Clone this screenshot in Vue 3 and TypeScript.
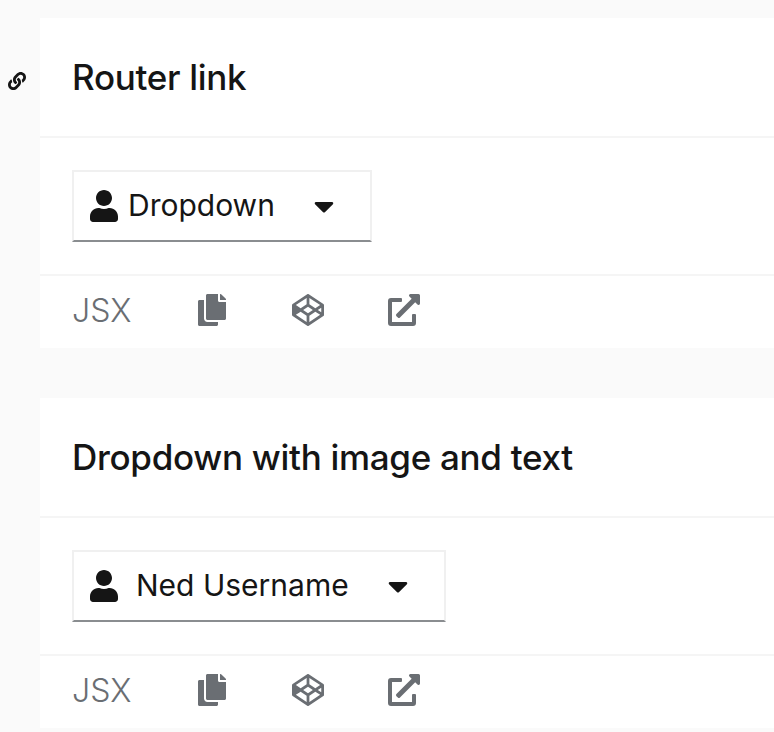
<script setup lang="ts">
interface Example {
  id: number;
  title: string;
  label: string;
  spaced: boolean;
  anchor: boolean;
}

const examples: Example[] = [
  { id: 1, title: "Router link", label: "Dropdown", spaced: false, anchor: true },
  { id: 2, title: "Dropdown with image and text", label: "Ned Username", spaced: true, anchor: false },
];
</script>

<template>
  <div class="page">
    <section v-for="ex in examples" :key="ex.id" class="card">
      <header class="card-head">
        <svg v-if="ex.anchor" class="anchor" viewBox="0 0 512 512" aria-hidden="true">
          <path d="M326.612 185.391c59.747 59.809 58.927 155.698.36 214.59-.11.12-.24.25-.36.37l-67.2 67.2c-59.27 59.27-155.699 59.262-214.96 0-59.27-59.26-59.27-155.7 0-214.96l37.106-37.106c9.84-9.84 26.786-3.3 27.294 10.606.648 17.722 3.826 35.527 9.69 52.721 1.986 5.822.567 12.262-3.783 16.612l-13.087 13.087c-28.026 28.026-28.905 73.66-1.155 101.96 28.024 28.579 74.086 28.749 102.325.51l67.2-67.19c28.191-28.191 28.073-73.757 0-101.83-3.701-3.694-7.429-6.564-10.341-8.569a16.037 16.037 0 0 1-6.947-12.606c-.396-10.567 3.348-21.456 11.698-29.806l21.054-21.055c5.521-5.521 14.182-6.199 20.584-1.731a152.482 152.482 0 0 1 20.522 17.197zM467.547 44.449c-59.261-59.262-155.69-59.27-214.96 0l-67.2 67.2c-.12.12-.25.25-.36.37-58.566 58.892-59.387 154.781.36 214.59a152.454 152.454 0 0 0 20.521 17.196c6.402 4.468 15.064 3.789 20.584-1.731l21.054-21.055c8.35-8.35 12.094-19.239 11.698-29.806a16.037 16.037 0 0 0-6.947-12.606c-2.912-2.005-6.64-4.875-10.341-8.569-28.073-28.073-28.191-73.639 0-101.83l67.2-67.19c28.239-28.239 74.3-28.069 102.325.51 27.75 28.3 26.872 73.934-1.155 101.96l-13.087 13.087c-4.35 4.35-5.769 10.79-3.783 16.612 5.864 17.194 9.042 34.999 9.69 52.721.509 13.906 17.454 20.446 27.294 10.606l37.106-37.106c59.271-59.259 59.271-155.699.001-214.959z" />
        </svg>
        <h2>{{ ex.title }}</h2>
      </header>

      <div class="card-body">
        <button class="toggle" type="button">
          <svg class="user" viewBox="0 0 448 512" aria-hidden="true">
            <path d="M224 256c70.7 0 128-57.3 128-128S294.7 0 224 0 96 57.3 96 128s57.3 128 128 128zm89.6 32h-16.7c-22.2 10.2-46.9 16-72.9 16s-50.6-5.8-72.9-16h-16.7C60.2 288 0 348.2 0 422.4V464c0 26.5 21.5 48 48 48h352c26.5 0 48-21.5 48-48v-41.6c0-74.2-60.2-134.4-134.4-134.4z" />
          </svg>
          <span class="label" :class="{ spaced: ex.spaced }">{{ ex.label }}</span>
          <svg class="caret" viewBox="0 0 320 512" aria-hidden="true">
            <path d="M31.3 192h257.3c17.8 0 26.7 21.5 14.1 34.1L174.1 354.8c-7.8 7.8-20.5 7.8-28.3 0L17.2 226.1C4.6 213.5 13.5 192 31.3 192z" />
          </svg>
        </button>
      </div>

      <footer class="card-foot">
        <span class="lang">JSX</span>
        <span class="tool">
          <svg viewBox="0 0 448 512" aria-hidden="true">
            <path d="M320 448v40c0 13.255-10.745 24-24 24H24c-13.255 0-24-10.745-24-24V120c0-13.255 10.745-24 24-24h72v296c0 30.879 25.121 56 56 56h168zm0-344V0H152c-13.255 0-24 10.745-24 24v368c0 13.255 10.745 24 24 24h272c13.255 0 24-10.745 24-24V128H344c-13.2 0-24-10.8-24-24zm120.971-31.029L375.029 7.029A24 24 0 0 0 358.059 0H352v96h96v-6.059a24 24 0 0 0-7.029-16.97z" />
          </svg>
        </span>
        <span class="tool">
          <svg viewBox="0 0 512 512" aria-hidden="true">
            <path d="M502.285 159.704l-234-156c-7.987-4.915-16.511-4.96-24.571 0l-234 156C3.714 163.703 0 170.847 0 177.989v155.999c0 7.143 3.714 14.286 9.715 18.286l234 156.022c7.987 4.915 16.511 4.96 24.571 0l234-156.022c6-3.999 9.715-11.143 9.715-18.286V177.989c-.001-7.142-3.715-14.286-9.716-18.285zM278 63.131l172.286 114.858-76.857 51.429L278 165.703V63.131zm-44 0v102.572l-95.429 63.715-76.857-51.429L234 63.131zM44 219.132v73.715l55.143-36.857L44 219.132zm190 229.715L61.714 333.989l76.857-51.429L234 346.275v102.572zm22-140.858l-77.715-52 77.715-52 77.715 52-77.715 52zm22 140.858V346.275l95.429-63.715 76.857 51.429L278 448.847zm190-156l-55.143-36.857L468 219.132v73.715z" />
          </svg>
        </span>
        <span class="tool">
          <svg viewBox="0 0 512 512" aria-hidden="true">
            <path d="M432,320H400a16,16,0,0,0-16,16V448H64V128H208a16,16,0,0,0,16-16V80a16,16,0,0,0-16-16H48A48,48,0,0,0,0,112V464a48,48,0,0,0,48,48H400a48,48,0,0,0,48-48V336A16,16,0,0,0,432,320ZM488,0h-128c-21.37,0-32.05,25.91-17,41l35.73,35.73L135,320.37a24,24,0,0,0,0,34L157.67,377a24,24,0,0,0,34,0L435.28,133.32,471,169c15,15,41,4.5,41-17V24A24,24,0,0,0,488,0Z" />
          </svg>
        </span>
      </footer>
    </section>
  </div>
</template>

<style>
html,
body {
  background: #fafafa;
  overflow: hidden;
}
</style>

<style scoped>
.page {
  display: flex;
  flex-direction: column;
  gap: 50px;
  height: 732px;
  padding: 18px 0 0 40px;
  box-sizing: border-box;
  overflow: hidden;
  font-family: "Inter", "Liberation Sans", sans-serif;
  color: #151515;
}

.card {
  position: relative;
  background: #fff;
  flex-shrink: 0;
}

.card-head {
  height: 118px;
  padding: 0 32px;
  display: flex;
  align-items: center;
  border-bottom: 2px solid #f5f5f5;
}

.card-head h2 {
  margin: 0;
  font-size: 35px;
  font-weight: 500;
  line-height: 1;
  letter-spacing: -0.3px;
}

.anchor {
  position: absolute;
  left: -32px;
  top: 54px;
  width: 18px;
  height: 18px;
  fill: #151515;
}

.card-body {
  height: 138px;
  padding: 32px 32px 0;
  box-sizing: border-box;
  border-bottom: 2px solid #f5f5f5;
}

.toggle {
  display: inline-flex;
  align-items: center;
  height: 72px;
  padding: 0 36px 0 16px;
  background: #fff;
  border: 2px solid #f0f0f0;
  border-bottom-color: #8a8d90;
  box-sizing: border-box;
  font: inherit;
  font-size: 30px;
  color: #151515;
}

.user {
  width: 28px;
  height: 32px;
  fill: #151515;
}

.label {
  margin: 0 0 2px 10px;
}

.label.spaced {
  margin-left: 18px;
}

.caret {
  width: 20px;
  height: 32px;
  margin-left: 39px;
  fill: #151515;
}

.card-foot {
  height: 72px;
  padding: 0 0 4px 32px;
  box-sizing: border-box;
  display: flex;
  align-items: center;
  font-weight: 300;
}

.lang {
  width: 92px;
  font-size: 32px;
  color: #6a6e73;
}

.tool {
  width: 96px;
  display: flex;
  justify-content: center;
}

.tool svg {
  height: 32px;
  width: 32px;
  fill: #6a6e73;
}
</style>
